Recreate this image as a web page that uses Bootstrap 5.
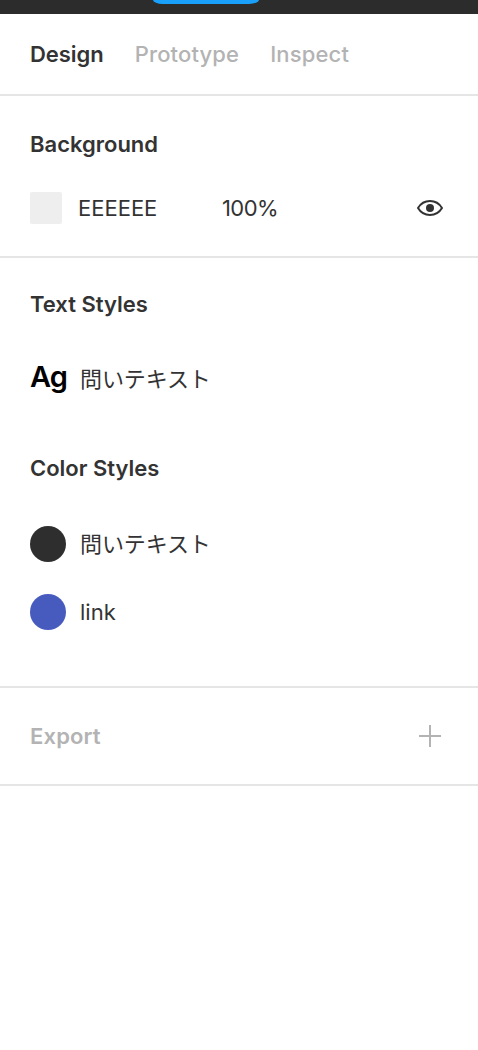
<!DOCTYPE html>
<html lang="en">
<head>
<meta charset="utf-8">
<meta name="viewport" content="width=device-width, initial-scale=1">
<title>Design panel</title>
<link rel="stylesheet" href="https://cdn.jsdelivr.net/npm/bootstrap@5.3.0/dist/css/bootstrap.min.css">
<style>
  body { font-family: Inter, "Noto Sans CJK JP", sans-serif; font-size: 22px; line-height: 32px; color: #333; background: #fff; }
  .topbar { height: 14px; background: #2c2c2c; padding-left: 153px; }
  .topbar-tab { width: 106px; height: 4px; background: #18a0fb; border-radius: 0 0 10px 10px / 0 0 4px 4px; }
  .panel { border-bottom: 2px solid #e5e5e5; padding-left: 30px; padding-right: 34px; }
  .tabs { height: 82px; gap: 31px; }
  .tabs a { color: #b3b3b3; font-weight: 500; text-decoration: none; letter-spacing: .15px; }
  .tabs a.active { color: #333; font-weight: 600; letter-spacing: -.05px; }
  .title { font-size: 22px; line-height: 32px; font-weight: 600; margin: 0; }
  .fill-panel { padding-top: 32px; padding-bottom: 32px; }
  .fill-row { height: 32px; margin-top: 32px; }
  .swatch { width: 32px; height: 32px; background: #eee; border-radius: 2px; margin-right: 16px; }
  .hex { width: 144px; }
  .opacity-value { letter-spacing: -.6px; }
  .styles-panel { padding-top: 30px; padding-bottom: 56px; }
  .style-row { height: 36px; }
  .preview { width: 36px; height: 36px; margin-right: 14px; flex: none; }
  .type-preview { font: 600 29px/36px Inter, sans-serif; color: #000; white-space: nowrap; letter-spacing: -1px; padding-bottom: 4px; height: 40px; }
  .jp { font-family: "Noto Sans CJK JP", sans-serif; font-weight: 400; padding-bottom: 4px; letter-spacing: -.1px; }
  .export-panel { height: 98px; padding-right: 37px; color: #b3b3b3; }
  .export-panel .title { letter-spacing: .15px; }
</style>
</head>
<body>
<header class="topbar"><div class="topbar-tab"></div></header>
<nav class="panel tabs d-flex align-items-center">
  <a href="#" class="active">Design</a>
  <a href="#">Prototype</a>
  <a href="#">Inspect</a>
</nav>
<section class="panel fill-panel">
  <h2 class="title">Background</h2>
  <div class="fill-row d-flex align-items-center">
    <div class="swatch"></div>
    <span class="hex">EEEEEE</span>
    <span class="opacity-value">100%</span>
    <svg class="ms-auto" width="28" height="20" viewBox="0 0 28 20" fill="none" aria-label="Visible">
      <path d="M2 10C4.800 5.300 9 3 14 3s9.200 2.300 12 7c-2.800 4.700-7 7-12 7S4.800 14.700 2 10Z" stroke="#333" stroke-width="2" stroke-linejoin="round"/>
      <circle cx="14" cy="10" r="4" fill="#333"/>
    </svg>
  </div>
</section>
<section class="panel styles-panel">
  <h2 class="title">Text Styles</h2>
  <div class="style-row d-flex align-items-center" style="margin-top:41px">
    <div class="preview type-preview">Ag</div>
    <span class="jp">問いテキスト</span>
  </div>
  <h2 class="title" style="margin-top:55px">Color Styles</h2>
  <div class="style-row d-flex align-items-center" style="margin-top:42px">
    <div class="preview rounded-circle" style="background:#2e2e2e"></div>
    <span class="jp">問いテキスト</span>
  </div>
  <div class="style-row d-flex align-items-center" style="margin-top:32px">
    <div class="preview rounded-circle" style="background:#475bbf"></div>
    <span>link</span>
  </div>
</section>
<section class="panel export-panel d-flex align-items-center justify-content-between">
  <h2 class="title">Export</h2>
  <svg width="22" height="22" viewBox="0 0 22 22" aria-label="Add"><path d="M11 0v22M0 11h22" stroke="#b3b3b3" stroke-width="2"/></svg>
</section>
<script src="https://cdn.jsdelivr.net/npm/bootstrap@5.3.0/dist/js/bootstrap.bundle.min.js"></script>
</body>
</html>
